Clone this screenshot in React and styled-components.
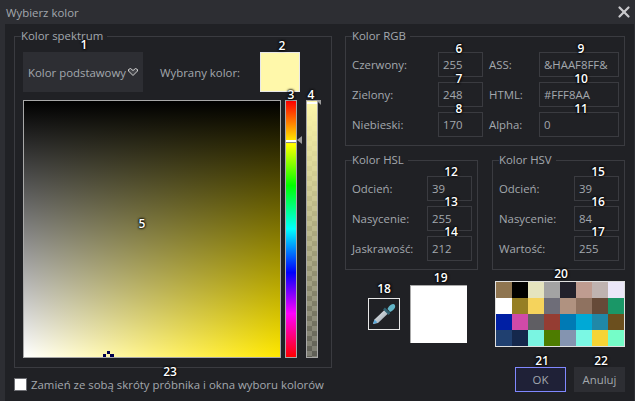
import React from 'react'
import styled, {createGlobalStyle} from 'styled-components'
import {X} from 'lucide-react'

const GlobalStyle = createGlobalStyle`
  html, body {
    margin: 0;
    padding: 0;
    background: #2d2e33;
  }
  * {
    box-sizing: border-box;
  }
`

const Window = styled.div`
  width: 635px;
  height: 401px;
  background: #2d2e33;
  color: #a3a8ae;
  font-family: "Open Sans", "Liberation Sans", sans-serif;
  font-size: 11.4px;
  overflow: hidden;
`

const TitleBar = styled.div`
  height: 24px;
  padding: 0 2px 0 6px;
  display: flex;
  align-items: center;
  justify-content: space-between;
`

const CloseIcon = styled(X)`
  width: 18px;
  height: 18px;
  color: #c8c8cc;
`

const Body = styled.div`
  height: 377px;
  margin: 0 1px 0 5px;
  padding: 5px 0 0 9px;
  background: #202125;
  display: flex;
  gap: 13px;
`

const Group = styled.fieldset`
  margin: 0;
  min-width: 0;
  width: ${p => p.$width}px;
  height: ${p => p.$height}px;
  padding: ${p => p.$padding};
  border: 1px solid #3a3b40;
  position: relative;
`

const GroupTitle = styled.legend`
  padding: 0 4px 0 0;
  margin-left: ${p => p.$shift || 0}px;
  line-height: 14px;
`

const LeftColumn = styled.div`
  width: 318px;
`

const RightColumn = styled.div`
  width: 280px;
  display: flex;
  flex-direction: column;
  gap: 7px;
`

const SpectrumTop = styled.div`
  display: flex;
  align-items: center;
  height: 40px;
`

const ModeSelect = styled.div`
  width: 120px;
  height: 40px;
  padding: 0 5px;
  background: #2d2e33;
  display: flex;
  align-items: center;
  justify-content: space-between;
  position: relative;
`

const SelectedLabel = styled.span`
  margin-left: 17px;
  width: 100px;
`

const SelectedSwatch = styled.div`
  width: 40px;
  height: 40px;
  background: #fff8aa;
  border: 1px solid #e8e8e8;
  position: relative;
`

const Pickers = styled.div`
  margin-top: 8px;
  display: flex;
`

const Spectrum = styled.div`
  width: 258px;
  height: 258px;
  border: 1px solid #a8a8a8;
  background:
    linear-gradient(to bottom, #000, rgba(0, 0, 0, 0)),
    linear-gradient(to right, #fff, #ffe800);
  position: relative;
`

const Crosshair = styled.svg`
  position: absolute;
  left: 79px;
  bottom: 0;
  width: 11px;
  height: 6px;
`

const HueBar = styled.div`
  width: 12px;
  height: 258px;
  margin-left: 4px;
  border: 1px solid #a8a8a8;
  background: linear-gradient(to bottom, #f00, #ff0 17%, #0f0 33%, #0ff 50%, #00f 67%, #f0f 83%, #f00);
  position: relative;
`

const HueLine = styled.div`
  position: absolute;
  left: 0;
  right: 0;
  top: ${p => p.$top}px;
  height: 2px;
  background: #fff;
  box-shadow: 0 1px 0 #888;
`

const SliderArrow = styled.div`
  position: absolute;
  left: 11px;
  top: ${p => p.$top}px;
  width: 0;
  height: 0;
  border-top: 4px solid transparent;
  border-bottom: 4px solid transparent;
  border-right: 5px solid #9a9a9a;
`

const AlphaArrow = styled.div`
  position: absolute;
  right: -4px;
  top: -1px;
  width: 0;
  height: 0;
  border-top: 5px solid #9a9a9a;
  border-left: 5px solid transparent;
`

const AlphaBar = styled.div`
  width: 12px;
  height: 258px;
  margin-left: 9px;
  border: 1px solid #a8a8a8;
  background:
    linear-gradient(to bottom, #fff8aa, rgba(255, 248, 170, 0)),
    repeating-conic-gradient(#5e5e56 0 25%, #7c7c72 0 50%) 0 0 / 10px 10px;
  position: relative;
`

const AlphaLine = styled.div`
  height: 2px;
  margin-top: 1px;
  background: #fff;
`

const ShortcutRow = styled.label`
  margin-top: 10px;
  height: 13px;
  display: flex;
  align-items: center;
  gap: 4px;
  white-space: nowrap;
`

const CheckBox = styled.span`
  width: 13px;
  height: 13px;
  background: #fff;
  border: 1px solid #6e6f74;
  flex: none;
`

const FormRow = styled.div`
  display: flex;
  align-items: center;
  height: 25px;
  margin-bottom: 5px;
`

const RowLabel = styled.span`
  width: ${p => p.$width}px;
  padding-left: ${p => p.$indent || 0}px;
  flex: none;
`

const Field = styled.div`
  width: ${p => p.$width}px;
  height: 25px;
  padding-left: 4px;
  border: 1px solid #3a3b40;
  display: flex;
  align-items: center;
  flex: none;
  position: relative;
`

const HslRow = styled.div`
  display: flex;
  gap: 14px;
`

const BottomArea = styled.div`
  margin-top: 4px;
  display: flex;
`

const PipetteButton = styled.div`
  width: 32px;
  height: 32px;
  margin: 17px 10px 0 23px;
  border: 1px solid #e8e8e8;
  display: flex;
  align-items: center;
  justify-content: center;
  position: relative;
`

const PreviewBox = styled.div`
  width: 58px;
  height: 58px;
  margin-top: 4px;
  background: #fff;
  border-top: 1px solid #aaa;
  border-left: 1px solid #aaa;
  position: relative;
`

const PaletteColumn = styled.div`
  margin-left: 28px;
  width: 130px;
`

const Palette = styled.div`
  width: 130px;
  height: 66px;
  border: 1px solid #e0e0e0;
  display: grid;
  grid-template-columns: repeat(8, 16px);
  grid-template-rows: repeat(4, 16px);
  position: relative;
`

const PaletteCell = styled.div`
  background: ${p => p.$color};
`

const Buttons = styled.div`
  margin-top: 20px;
  margin-left: 20px;
  display: flex;
  gap: 8px;
`

const DialogButton = styled.div`
  width: 51px;
  height: 25px;
  display: flex;
  align-items: center;
  justify-content: center;
  position: relative;
  background: ${p => (p.$primary ? '#1f2137' : '#2d2e33')};
  border: 1px solid ${p => (p.$primary ? '#8088ff' : '#2d2e33')};
`

const Badge = styled.span`
  position: absolute;
  left: ${p => p.$left}px;
  top: ${p => p.$top}px;
  transform: translateX(-50%);
  color: #fff;
  font-size: 12px;
  font-weight: 600;
  line-height: 14px;
  text-shadow: 0 0 2px #000, 0 0 2px #000, 0 0 3px #000;
  z-index: 2;
`

const paletteColors = [
  '#8f7550', '#000000', '#e5e4bf', '#a3a3a3', '#22212b', '#bf9c90', '#bfb3b0', '#ebe7f8',
  '#ffffff', '#967f24', '#f5d35c', '#6e6d78', '#b09280', '#8f7260', '#664a38', '#1a9767',
  '#001fa4', '#d04aa8', '#5f5e63', '#953d33', '#007ab5', '#00a9d6', '#2088a8', '#6b4f1e',
  '#204070', '#15284c', '#7af5e2', '#4d7c00', '#8494b0', '#7bf8e4', '#f6d435', '#75fdc8'
]

const Pipette = () => (
  <svg width="24" height="22" viewBox="0 0 24 22">
    <defs>
      <linearGradient id="barrel" x1="0" y1="0" x2="1" y2="1">
        <stop offset="0" stopColor="#f4f6f8" />
        <stop offset="1" stopColor="#8d9aa5" />
      </linearGradient>
    </defs>
    <path d="M1 21 L2.5 16.5 L12.5 7 L16 10.5 L6 20 Z" fill="url(#barrel)" />
    <path d="M1 21 L2.5 16.5 L5.5 19.5 Z" fill="#5aa9dc" />
    <path d="M12 5.5 L17.5 11" stroke="#2f6272" strokeWidth="2.5" />
    <path d="M15.5 6 C16 4 19 1 21 1 C23 1 23.5 3 23 4.5 C22 6.5 20 8.5 18 9 Z" fill="#63b6c8" />
  </svg>
)

const Chevron = () => (
  <svg width="10" height="8" viewBox="0 0 10 8">
    <path d="M0.5 1.5 L2.5 0.5 L5 2.5 L7.5 0.5 L9.5 1.5 L9.5 3 L5 7.5 L0.5 3 Z" fill="#44454a" stroke="#d0d0d0" strokeWidth="1" />
  </svg>
)

const RgbRow = ({label, value, badge, sideLabel, sideValue, sideBadge}) => (
  <FormRow>
    <RowLabel $width={86}>{label}</RowLabel>
    <Field $width={45}>
      {value}
      <Badge $left={20} $top={-11}>{badge}</Badge>
    </Field>
    <RowLabel $width={56} $indent={6}>{sideLabel}</RowLabel>
    <Field $width={80}>
      {sideValue}
      <Badge $left={41} $top={-11}>{sideBadge}</Badge>
    </Field>
  </FormRow>
)

const ColorField = ({label, value, badge}) => (
  <FormRow>
    <RowLabel $width={75}>{label}</RowLabel>
    <Field $width={45}>
      {value}
      <Badge $left={23} $top={-12}>{badge}</Badge>
    </Field>
  </FormRow>
)

const App = () => (
  <Window>
    <GlobalStyle />
    <TitleBar>
      <span>Wybierz kolor</span>
      <CloseIcon strokeWidth={3} />
    </TitleBar>
    <Body>
      <LeftColumn>
        <Group $width={318} $height={339} $padding="9px 8px 0 8px">
          <GroupTitle $shift={-2}>Kolor spektrum</GroupTitle>
          <SpectrumTop>
            <ModeSelect>
              Kolor podstawowy
              <Chevron />
              <Badge $left={61} $top={-14}>1</Badge>
            </ModeSelect>
            <SelectedLabel>Wybrany kolor:</SelectedLabel>
            <SelectedSwatch>
              <Badge $left={21} $top={-14}>2</Badge>
            </SelectedSwatch>
          </SpectrumTop>
          <Pickers>
            <Spectrum>
              <Crosshair viewBox="0 0 11 6">
                <path d="M4 0h3v3H4zM0 3h3v3H0zM7 3h4v3H7z" fill="#000050" />
              </Crosshair>
              <Badge $left={118} $top={116}>5</Badge>
            </Spectrum>
            <HueBar>
              <HueLine $top={39} />
              <SliderArrow $top={35} />
              <Badge $left={5} $top={-13}>3</Badge>
            </HueBar>
            <AlphaBar>
              <AlphaLine />
              <AlphaArrow />
              <Badge $left={4} $top={-13}>4</Badge>
            </AlphaBar>
          </Pickers>
          <Badge $left={155} $top={322}>23</Badge>
        </Group>
        <ShortcutRow>
          <CheckBox />
          Zamień ze sobą skróty próbnika i okna wyboru kolorów
        </ShortcutRow>
      </LeftColumn>
      <RightColumn>
        <Group $width={280} $height={117} $padding="9px 5px 0 6px">
          <GroupTitle>Kolor RGB</GroupTitle>
          <RgbRow label="Czerwony:" value="255" badge="6" sideLabel="ASS:" sideValue="&HAAF8FF&" sideBadge="9" />
          <RgbRow label="Zielony:" value="248" badge="7" sideLabel="HTML:" sideValue="#FFF8AA" sideBadge="10" />
          <RgbRow label="Niebieski:" value="170" badge="8" sideLabel="Alpha:" sideValue="0" sideBadge="11" />
        </Group>
        <HslRow>
          <Group $width={133} $height={117} $padding="9px 5px 0 6px">
            <GroupTitle>Kolor HSL</GroupTitle>
            <ColorField label="Odcień:" value="39" badge="12" />
            <ColorField label="Nasycenie:" value="255" badge="13" />
            <ColorField label="Jaskrawość:" value="212" badge="14" />
          </Group>
          <Group $width={133} $height={117} $padding="9px 5px 0 6px">
            <GroupTitle>Kolor HSV</GroupTitle>
            <ColorField label="Odcień:" value="39" badge="15" />
            <ColorField label="Nasycenie:" value="84" badge="16" />
            <ColorField label="Wartość:" value="255" badge="17" />
          </Group>
        </HslRow>
        <BottomArea>
          <PipetteButton>
            <Pipette />
            <Badge $left={15} $top={-17}>18</Badge>
          </PipetteButton>
          <PreviewBox>
            <Badge $left={30} $top={-15}>19</Badge>
          </PreviewBox>
          <PaletteColumn>
            <Palette>
              {paletteColors.map((color, i) => (
                <PaletteCell key={i} $color={color} />
              ))}
              <Badge $left={65} $top={-15}>20</Badge>
            </Palette>
            <Buttons>
              <DialogButton $primary>
                OK
                <Badge $left={26} $top={-14}>21</Badge>
              </DialogButton>
              <DialogButton>
                Anuluj
                <Badge $left={26} $top={-14}>22</Badge>
              </DialogButton>
            </Buttons>
          </PaletteColumn>
        </BottomArea>
      </RightColumn>
    </Body>
  </Window>
)

export default App
